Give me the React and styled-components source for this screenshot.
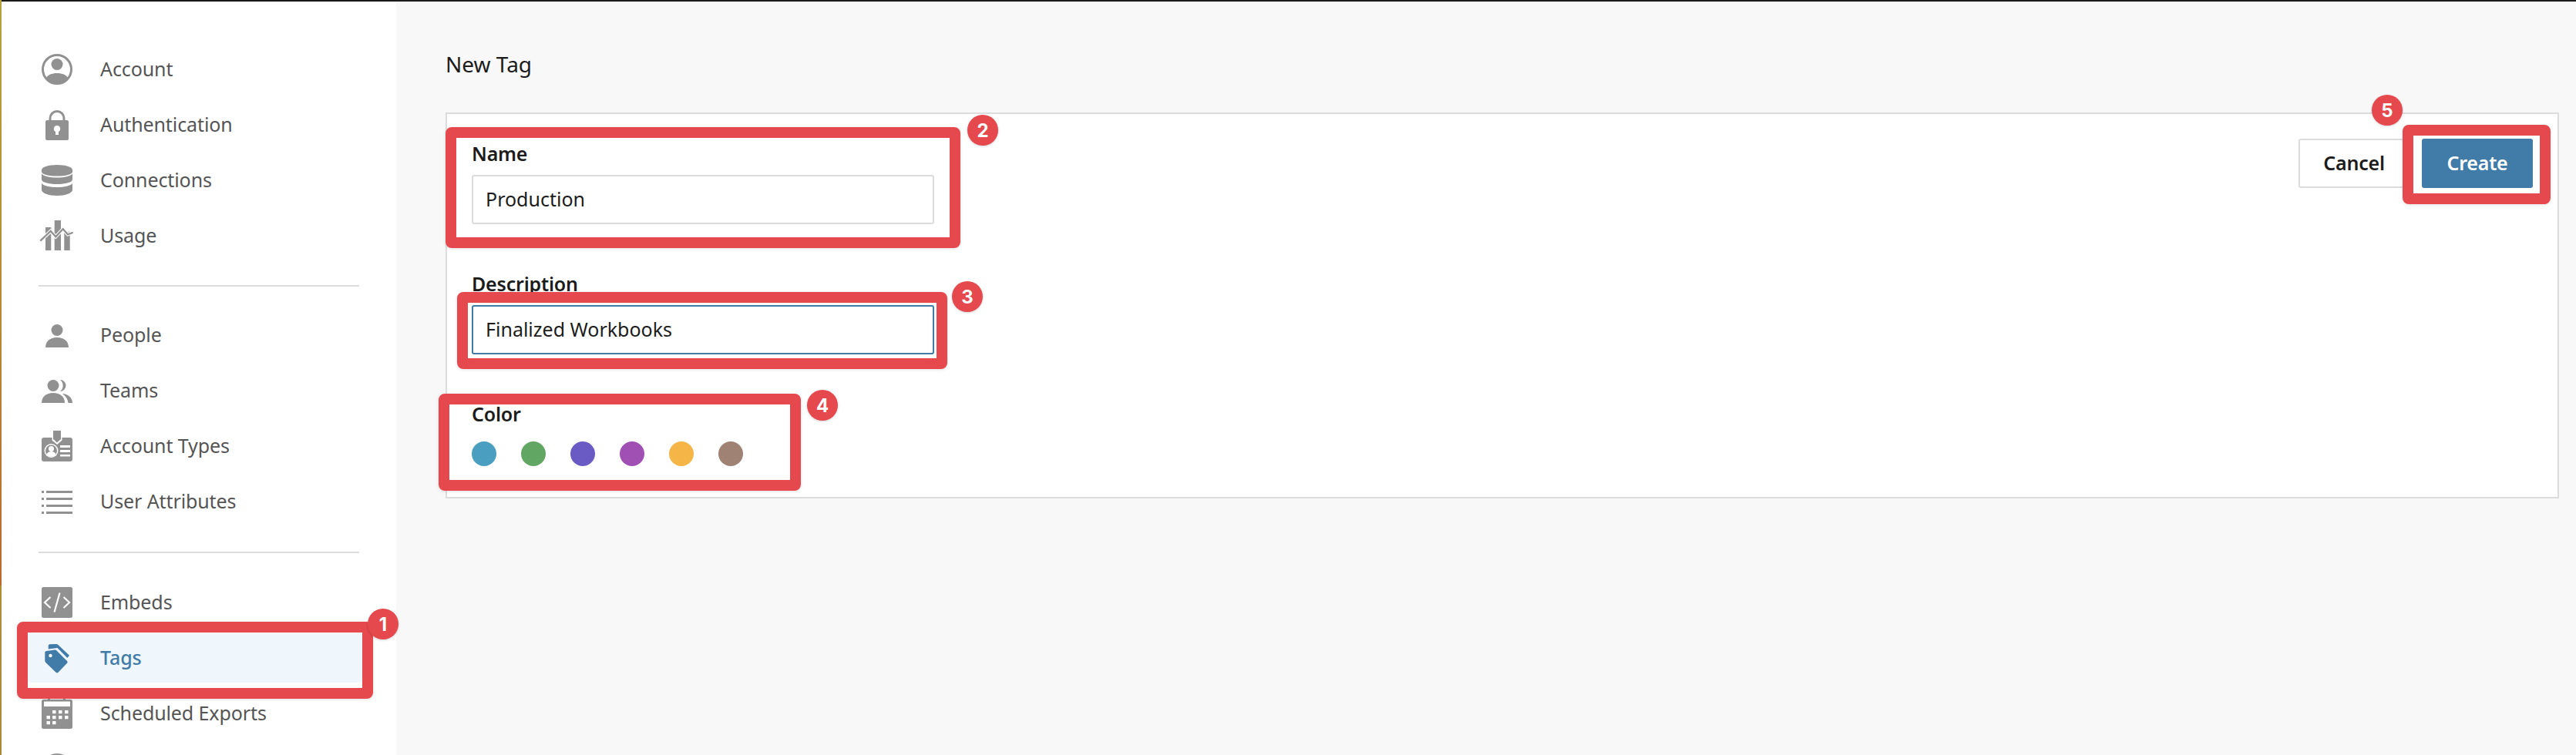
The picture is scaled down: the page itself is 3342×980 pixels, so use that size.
import React from "react";
import styled, { createGlobalStyle } from "styled-components";

const FONT = `"Noto Sans", "Open Sans", sans-serif`;

const Global = createGlobalStyle`
  html, body { margin: 0; padding: 0; background: #f8f8f8; }
  body { font-family: ${FONT}; overflow: hidden; }
  * { box-sizing: border-box; }
`;

const Page = styled.div`
  position: relative;
  display: flex;
  width: 3342px;
  height: 980px;
  overflow: hidden;
  background: #f8f8f8;
`;

const EdgeStrip = styled.div`
  flex: 0 0 2px;
  background: linear-gradient(180deg, #b3a23f 0, #b68a35 400px, #bb6a2b 760px, #ad8f38 760px, #a98a36 980px);
`;

const Shell = styled.div`
  flex: 1;
  display: flex;
  min-width: 0;
  border-top: 2px solid #1a1a1a;
`;

const Sidebar = styled.nav`
  flex: 0 0 512px;
  height: 978px;
  background: #fff;
  padding: 56px 0 0 34px;
  overflow: hidden;
`;

const NavGroup = styled.div`
  display: flex;
  flex-direction: column;
  gap: 8px;
`;

const NavRow = styled.div`
  display: flex;
  align-items: center;
  flex: 0 0 64px;
  width: 434px;
  padding-left: 18px;
  gap: 36px;
  border-radius: 4px;
  background: ${(p) => (p.$active ? "#eff7fd" : "transparent")};
  color: ${(p) => (p.$active ? "#417ba8" : "#555")};
  font-size: 25px;
  letter-spacing: -0.1px;
  font-weight: ${(p) => (p.$active ? 500 : 400)};
`;

const NavLabel = styled.span`
  margin-bottom: 2px;
`;

const IconSvg = styled.svg`
  flex: 0 0 40px;
  width: 40px;
  height: 40px;
  overflow: visible;
  color: ${(p) => (p.$active ? "#417ba8" : "#919191")};
`;

const Divider = styled.hr`
  width: 416px;
  height: 2px;
  margin: ${(p) => p.$margin};
  margin-left: 14px;
  border: 0;
  background: #dcdcdc;
`;

const Main = styled.main`
  flex: 1;
  padding: 62px 22px 0 64px;
  min-width: 0;
`;

const Title = styled.h1`
  margin: 0 0 42px;
  height: 40px;
  line-height: 38px;
  font-size: 28px;
  font-weight: 400;
  color: #1c1c1c;
`;

const Card = styled.section`
  display: flex;
  justify-content: space-between;
  align-items: flex-start;
  height: 501px;
  background: #fff;
  border: 2px solid #dcdcdc;
  padding: 32px 32px 0 32px;
`;

const Form = styled.div`
  display: flex;
  flex-direction: column;
  width: 600px;
  padding-top: 2px;
`;

const Label = styled.div`
  height: 36px;
  line-height: 34px;
  font-size: 25px;
  font-weight: 600;
  letter-spacing: -0.2px;
  color: #1c1c1c;
  margin-top: ${(p) => p.$top || 0}px;
`;

const InputBox = styled.div`
  display: flex;
  align-items: center;
  height: 64px;
  margin-top: 9px;
  padding: 0 0 2px 16px;
  border: 2px solid ${(p) => (p.$focused ? "#417ba8" : "#dcdcdc")};
  border-radius: 3px;
  background: #fff;
  font-size: 25px;
  color: #1c1c1c;
`;

const Swatches = styled.div`
  display: flex;
  gap: 32px;
  margin-top: 17px;
`;

const Swatch = styled.span`
  width: 32px;
  height: 32px;
  border-radius: 50%;
  background: ${(p) => p.$color};
`;

const Actions = styled.div`
  display: flex;
  gap: 16px;
`;

const Button = styled.button`
  width: ${(p) => p.$width}px;
  height: 64px;
  padding: 0 0 2px;
  border-radius: 3px;
  font-family: ${FONT};
  font-size: 25px;
  font-weight: 600;
  letter-spacing: -0.2px;
  border: ${(p) => (p.$primary ? "0" : "2px solid #dcdcdc")};
  background: ${(p) => (p.$primary ? "#417ba8" : "#fff")};
  color: ${(p) => (p.$primary ? "#fff" : "#1c1c1c")};
`;

const Callout = styled.div`
  position: absolute;
  left: ${(p) => p.$x}px;
  top: ${(p) => p.$y}px;
  width: ${(p) => p.$w}px;
  height: ${(p) => p.$h}px;
  border: 14px solid #e5484d;
  border-radius: 8px;
  box-shadow: 0 1px 4px rgba(0, 0, 0, 0.12);
  pointer-events: none;
`;

const Badge = styled.div`
  position: absolute;
  left: ${(p) => p.$cx - 20}px;
  top: ${(p) => p.$cy - 20}px;
  width: 40px;
  height: 40px;
  display: flex;
  align-items: center;
  justify-content: center;
  border-radius: 50%;
  background: #e5484d;
  color: #fff;
  font-family: "Inter", ${FONT};
  font-size: 24px;
  font-weight: 700;
  box-shadow: 0 1px 3px rgba(0, 0, 0, 0.18);
`;

const Icon = ({ children, active }) => (
  <IconSvg viewBox="0 0 40 40" fill="currentColor" $active={active} aria-hidden="true">
    {children}
  </IconSvg>
);

const icons = {
  account: (
    <>
      <circle cx="20" cy="20" r="18.500" fill="none" stroke="currentColor" strokeWidth="3" />
      <circle cx="20" cy="13.500" r="7.500" />
      <path d="M20 25c-7 0-12 2.300-14 6 3 4.700 8 7.500 14 7.500s11-2.800 14-7.500c-2-3.700-7-6-14-6z" />
    </>
  ),
  lock: (
    <>
      <path d="M11 15v-5a9 9 0 0 1 18 0v5" fill="none" stroke="currentColor" strokeWidth="3" transform="translate(0 1.500)" />
      <rect x="5" y="14" width="30" height="26" rx="2" />
      <path d="M20 21a4.200 4.200 0 0 0-2 7.900V33h4v-4.100A4.200 4.200 0 0 0 20 21z" fill="#fff" />
    </>
  ),
  database: (
    <>
      <path d="M0 6.500C0 2.900 9 0 20 0s20 2.900 20 6.500V9c0 3.500-9 5.500-20 5.500S0 12.500 0 9z" />
      <path d="M0 11.500c3 3.300 10 5 20 5s17-1.700 20-5V19c0 3.500-9 6-20 6S0 22.500 0 19z" />
      <path d="M0 24c3 3.300 10 5 20 5s17-1.700 20-5v8.500c0 4-9 7.500-20 7.500S0 36.500 0 32.500z" />
    </>
  ),
  usage: (
    <>
      <rect x="5" y="9" width="7.300" height="30" />
      <rect x="16.700" y="0" width="8.300" height="39" />
      <rect x="29.300" y="14.700" width="7.400" height="24.300" />
      <polyline points="-1.700,26.700 11.700,14 18.300,21.300 27.700,11.300 34,18.300 40.700,15.700" fill="none" stroke="#fff" strokeWidth="4.500" />
      <polyline points="-1.700,26.700 11.700,14 18.300,21.300 27.700,11.300 34,18.300 40.700,15.700" fill="none" stroke="currentColor" strokeWidth="2.300" />
    </>
  ),
  person: (
    <>
      <circle cx="20" cy="13.500" r="7.500" />
      <path d="M5 36c0-8 6-13 15-13s15 5 15 13z" />
    </>
  ),
  teams: (
    <>
      <path d="M24 6a7.500 7.500 0 1 1 0 15 9.500 9.500 0 0 0 0-15z" />
      <circle cx="15" cy="13.500" r="7.500" />
      <path d="M0 36c0-8 6-13 15-13s15 5 15 13z" />
      <path d="M27 24c7 .5 13 5 13 12h-5.500c-.5-5-3.500-9-7.500-12z" />
    </>
  ),
  badge: (
    <>
      <rect x="0" y="9" width="40" height="31" rx="3" />
      <path d="M13.500 9V-1h13v10l0 3.500L20 18l-6.500-5.500z" fill="#fff" />
      <path d="M15 0h10v11l-5 4.500L15 11z" />
      <circle cx="12.500" cy="26" r="9" fill="#fff" />
      <circle cx="12.500" cy="26" r="7.500" />
      <circle cx="12.500" cy="23.500" r="3.500" fill="#fff" />
      <path d="M6.500 31c1-3 3-4 6-4s5 1 6 4a8 8 0 0 1-12 0z" fill="#fff" />
      <rect x="24" y="19" width="13" height="3" fill="#fff" />
      <rect x="24" y="25" width="13" height="3" fill="#fff" />
      <rect x="24" y="31" width="13" height="2.500" fill="#fff" />
    </>
  ),
  list: (
    <>
      {[6, 15, 24, 33].map((y) => (
        <React.Fragment key={y}>
          <rect x="0" y={y} width="3" height="3" />
          <rect x="6" y={y} width="34" height="3" />
        </React.Fragment>
      ))}
    </>
  ),
  embed: (
    <>
      <rect x="0" y="0" width="40" height="40" rx="2.500" />
      <path d="M11.500 13 4 20l7.500 7M28.500 13 36 20l-7.500 7M23.500 7.500 16.500 32.500" fill="none" stroke="#fff" strokeWidth="2.200" />
    </>
  ),
  tag: (
    <>
      <path d="M6.500 11 17 9.500c1-.1 1.800.2 2.500.9L33 24c.8.900.8 2 0 2.800L21.500 38.800c-.9.900-2 .9-2.900 0L5.300 26c-.7-.7-1-1.500-1-2.500V13c0-1.100.9-1.800 2.200-2z" />
      <path d="M8.700 4.500c0-1 .8-2 2-2.200L19 2c.8 0 1.500.2 2.100.8L36 16.800 33.300 20 20.500 7 8.700 8.500z" />
      <circle cx="11.500" cy="17" r="2.200" fill="#fff" />
    </>
  ),
  calendar: (
    <>
      <rect x="8" y="0" width="3" height="3" />
      <rect x="28" y="0" width="3" height="3" />
      <rect x="0" y="2" width="40" height="38" rx="2.500" />
      <rect x="3" y="4.500" width="34" height="6.500" fill="#fff" />
      {[[14, 16], [22, 16], [30, 16], [6.500, 23], [14, 23], [22, 23], [30, 23], [6.500, 30], [14, 30]].map(([x, y]) => (
        <rect key={`${x}-${y}`} x={x} y={y} width="4.500" height="4.300" rx="0.500" fill="#fff" />
      ))}
    </>
  ),
  circle: <circle cx="20" cy="20" r="18.500" fill="none" stroke="currentColor" strokeWidth="3" />,
};

const groups = [
  { margin: "32px 0 31px", rows: [["account", "Account"], ["lock", "Authentication"], ["database", "Connections"], ["usage", "Usage"]] },
  { margin: "33px 0 32px", rows: [["person", "People"], ["teams", "Teams"], ["badge", "Account Types"], ["list", "User Attributes"]] },
  { rows: [["embed", "Embeds"], ["tag", "Tags", true], ["calendar", "Scheduled Exports"], ["circle", ""]] },
];

const swatches = ["#4a9fc0", "#62a663", "#6a5bc4", "#a04fb3", "#f5b547", "#9f8274"];

const callouts = [
  { x: 22, y: 807, w: 462, h: 100 },
  { x: 578, y: 165, w: 668, h: 157 },
  { x: 593, y: 379, w: 636, h: 100 },
  { x: 569, y: 511, w: 470, h: 126 },
  { x: 3117, y: 162, w: 192, h: 103 },
];

const badges = [
  { n: 1, cx: 497, cy: 810 },
  { n: 2, cx: 1275, cy: 169 },
  { n: 3, cx: 1255, cy: 385 },
  { n: 4, cx: 1067, cy: 526 },
  { n: 5, cx: 3097, cy: 143 },
];

export default function App() {
  return (
    <>
      <Global />
      <Page>
        <EdgeStrip />
        <Shell>
          <Sidebar>
            {groups.map((group, i) => (
              <React.Fragment key={i}>
                <NavGroup>
                  {group.rows.map(([icon, label, active]) => (
                    <NavRow key={icon} $active={active}>
                      <Icon active={active}>{icons[icon]}</Icon>
                      <NavLabel>{label}</NavLabel>
                    </NavRow>
                  ))}
                </NavGroup>
                {group.margin && <Divider $margin={group.margin} />}
              </React.Fragment>
            ))}
          </Sidebar>
          <Main>
            <Title>New Tag</Title>
            <Card>
              <Form>
                <Label>Name</Label>
                <InputBox>Production</InputBox>
                <Label $top={60}>Description</Label>
                <InputBox $focused>Finalized Workbooks</InputBox>
                <Label $top={60}>Color</Label>
                <Swatches>
                  {swatches.map((c) => (
                    <Swatch key={c} $color={c} />
                  ))}
                </Swatches>
              </Form>
              <Actions>
                <Button $width={144}>Cancel</Button>
                <Button $primary $width={144}>Create</Button>
              </Actions>
            </Card>
          </Main>
        </Shell>
        {callouts.map((c) => (
          <Callout key={c.x} $x={c.x} $y={c.y} $w={c.w} $h={c.h} />
        ))}
        {badges.map((b) => (
          <Badge key={b.n} $cx={b.cx} $cy={b.cy}>{b.n}</Badge>
        ))}
      </Page>
    </>
  );
}
